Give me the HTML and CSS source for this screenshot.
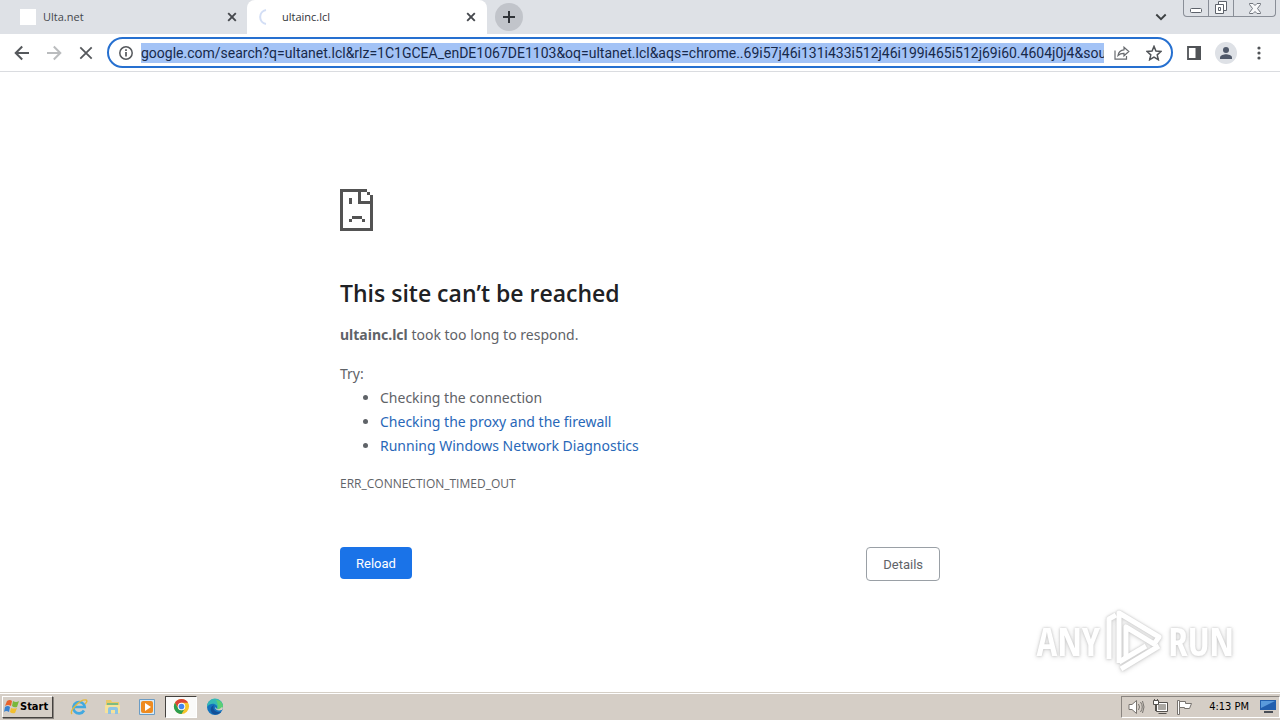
FILE: index.html
```html
<!DOCTYPE html>
<html lang="en">
<head>
<meta charset="utf-8">
<meta name="viewport" content="width=device-width, initial-scale=1">
<title>ultainc.lcl</title>
<link rel="stylesheet" href="styles.css">
</head>
<body>
<header class="tabstrip">
  <div class="tab">
    <span class="favicon"></span>
    <span class="tab-title">Ulta.net</span>
    <button class="icon-button tab-close" aria-label="Close Ulta.net"><svg width="10" height="10" viewBox="0 0 10 10"><path d="M1.2 1.2l7.6 7.6M8.8 1.2L1.2 8.8" stroke="#45484d" stroke-width="1.9"/></svg></button>
  </div>
  <div class="tab tab-active">
    <svg class="spinner" width="16" height="16" viewBox="0 0 16 16" fill="none"><path d="M9 1.1A7 7 0 0 0 9 14.9" stroke="#d3def5" stroke-width="2"/></svg>
    <span class="tab-title">ultainc.lcl</span>
    <button class="icon-button tab-close" aria-label="Close ultainc.lcl"><svg width="10" height="10" viewBox="0 0 10 10"><path d="M1.2 1.2l7.6 7.6M8.8 1.2L1.2 8.8" stroke="#45484d" stroke-width="1.9"/></svg></button>
  </div>
  <button class="icon-button new-tab" aria-label="New tab"><svg width="12" height="12" viewBox="0 0 12 12"><path d="M6 0v12M0 6h12" stroke="#303338" stroke-width="2"/></svg></button>
  <button class="icon-button tab-search" aria-label="Search tabs"><svg width="12" height="8" viewBox="0 0 12 8" fill="none"><path d="M1.3 1.5L6 6.2l4.700-4.700" stroke="#3c4043" stroke-width="1.9"/></svg></button>
  <div class="window-controls">
    <button class="icon-button win-button" aria-label="Minimize"><svg width="12" height="5" viewBox="0 0 12 5"><rect x=".5" y=".5" width="11" height="4" rx="1" fill="#fff" stroke="#5d626b"/></svg></button>
    <button class="icon-button win-button" aria-label="Restore"><svg width="14" height="14" viewBox="0 0 14 14" fill="#fff" stroke="#5d626b"><path d="M4.500.5h8v9h-8z"/><path d="M1.500 3.500h8v9h-8z"/><path d="M4.500 6.500h2v3h-2z"/></svg></button>
    <button class="icon-button win-button win-close" aria-label="Close window"><svg width="12" height="11" viewBox="0 0 12 11"><path d="M.5.500h3.500l2 2 2-2h3.500v1l-3 4 3 4v1H8l-2-2-2 2H.5v-1l3-4-3-4z" fill="#f7f8fa" stroke="#70757d"/></svg></button>
  </div>
</header>
<nav class="toolbar" aria-label="Browser toolbar">
  <button class="icon-button nav-button" aria-label="Back"><svg width="16" height="16" viewBox="0 0 16 16" fill="none"><path d="M15 8H2M8.200 1.500L1.700 8l6.500 6.500" stroke="#55585c" stroke-width="2"/></svg></button>
  <button class="icon-button nav-button" aria-label="Forward"><svg width="16" height="16" viewBox="0 0 16 16" fill="none"><path d="M1 8h13M7.800 1.500L14.300 8l-6.500 6.500" stroke="#babcbe" stroke-width="2"/></svg></button>
  <button class="icon-button nav-button" aria-label="Stop loading"><svg width="14" height="14" viewBox="0 0 14 14"><path d="M1.300 1.300l11.400 11.400M12.700 1.300L1.300 12.700" stroke="#55585c" stroke-width="1.800"/></svg></button>
  <div class="omnibox">
    <button class="icon-button" aria-label="View site information"><svg width="14" height="14" viewBox="0 0 14 14"><circle cx="7" cy="7" r="6.200" fill="none" stroke="#55585c" stroke-width="1.500"/><path d="M7 6v4.500M7 3.300v1.700" stroke="#55585c" stroke-width="1.700"/></svg></button>
    <input class="address" type="text" aria-label="Address" spellcheck="false" value="google.com/search?q=ultanet.lcl&amp;rlz=1C1GCEA_enDE1067DE1103&amp;oq=ultanet.lcl&amp;aqs=chrome..69i57j46i131i433i512j46i199i465i512j69i60.4604j0j4&amp;sour">
    <button class="icon-button share" aria-label="Share"><svg width="16" height="14" viewBox="0 0 16 14" fill="none" stroke="#686b6f" stroke-width="1.200"><path d="M1 4.500v8.700h11.500V10"/><path d="M4 9.500c.6-3.700 2.800-5.500 6-5.700V1.200l4.800 4.300L10 9.800V7.300C7.500 7.200 5.700 7.800 4 9.500z"/></svg></button>
    <button class="icon-button bookmark" aria-label="Bookmark this tab"><svg width="16" height="16" viewBox="0 0 14 14"><path d="M7 1.200l1.700 4.100 4.400.4-3.300 2.900 1 4.300L7 10.600l-3.800 2.300 1-4.300L.9 5.700l4.400-.4z" fill="none" stroke="#505357" stroke-width="1.300"/></svg></button>
  </div>
  <button class="icon-button side-panel" aria-label="Side panel"><svg width="14" height="14" viewBox="0 0 14 14"><path d="M1 1h12v12H1z" fill="#fff" stroke="#505357" stroke-width="1.800"/><path d="M8.500 0H14v14H8.500z" fill="#505357"/></svg></button>
  <button class="icon-button profile" aria-label="Profile"><svg width="22" height="22" viewBox="0 0 22 22"><circle cx="11" cy="11" r="11" fill="#dee1e6"/><circle cx="11" cy="8" r="3" fill="#50596a"/><path d="M5 17v-1.500c0-2.300 4-3.300 6-3.300s6 1 6 3.300V17z" fill="#50596a"/></svg></button>
  <button class="icon-button more" aria-label="Browser menu"><svg width="4" height="14" viewBox="0 0 4 14" fill="#505357"><circle cx="2" cy="2" r="1.600"/><circle cx="2" cy="7" r="1.600"/><circle cx="2" cy="12" r="1.600"/></svg></button>
</nav>
<main class="page">
  <div class="content">
    <svg class="sad-page" width="33" height="42" viewBox="0 0 33 42" fill="#535353" shape-rendering="crispEdges"><path d="M0 0h27v3H3v36h27V15H18V3h3v9h9V6h3v36H0z"/><path d="M27 3h3v3h-3zM9 9h3v6H9zM12 27h10v3H12zM9 30h3v3H9zM22 30h3v3h-3z"/></svg>
    <h1>This site can’t be reached</h1>
    <p><strong>ultainc.lcl</strong> took too long to respond.</p>
    <div class="suggestions">
      <p>Try:</p>
      <ul>
        <li>Checking the connection</li>
        <li><a href="#proxy">Checking the proxy and the firewall</a></li>
        <li><a href="#diagnostics">Running Windows Network Diagnostics</a></li>
      </ul>
    </div>
    <p class="error-code">ERR_CONNECTION_TIMED_OUT</p>
    <div class="actions">
      <button class="action reload">Reload</button>
      <button class="action details">Details</button>
    </div>
  </div>
  <div class="watermark" aria-label="ANY RUN">
    <span>ANY</span>
    <svg width="60" height="66" viewBox="0 0 60 66" fill="none" stroke="#fff" stroke-width="5" stroke-linejoin="round"><path d="M5 51V11l7-4"/><path d="M15 55V5l40 24-5 7-28-17v30"/><path d="M15 54l27-16M17 61l38-23"/></svg>
    <span>RUN</span>
  </div>
</main>
<footer class="taskbar">
  <button class="start"><svg width="16" height="16" viewBox="0 0 16 16"><path d="M3 2q3-2 5 0L7 7Q4 5 1 7z" fill="#e9632c"/><path d="M9 2q3 2 6 0l-2 6q-3 1-5-1z" fill="#79b83c"/><path d="M1 8q3-2 5 0l-1 5q-3-2-5 0z" fill="#3a82d0"/><path d="M7 9q3 1 6 0l-2 5q-3 1-5-1z" fill="#f2bf30"/></svg>Start</button>
  <button class="icon-button task" aria-label="Internet Explorer"><svg width="18" height="18" viewBox="0 0 18 18" fill="none"><path d="M14 12.500A5.700 5.700 0 1 1 14.700 9H4" stroke="#42a9e0" stroke-width="2.600"/><path d="M2 16C-1 13 10 1 16 2c2 1 0 3-1 4" stroke="#e5b93c" stroke-width="1.400"/></svg></button>
  <button class="icon-button task" aria-label="File Explorer"><svg width="18" height="18" viewBox="0 0 18 18"><path d="M2 2h5l1 2h7v11H2z" fill="#e9c968"/><path d="M3 5h11v3H3z" fill="#7dbb80"/><path d="M1 7h15v8H1z" fill="#f6e29a"/><path d="M4 16v-5q0-2 2-2h6q2 0 2 2v5h-3v-4H7v4z" fill="#8dc4e4"/></svg></button>
  <button class="icon-button task" aria-label="Media Player"><svg width="18" height="18" viewBox="0 0 18 18"><path d="M1.500 1.500h15v15h-15z" fill="#d8ebf8" stroke="#6b9cc4"/><path d="M3 5q0-2 2-2h8q2 0 2 2v8q0 2-2 2H5q-2 0-2-2z" fill="#ee8b20"/><path d="M7 5l6 4-6 4z" fill="#fff"/></svg></button>
  <button class="icon-button task task-active" aria-label="Google Chrome"><svg width="17" height="17" viewBox="0 0 18 18"><circle cx="9" cy="9" r="8" fill="#f6c42b"/><path d="M2.070 5A8 8 0 0 1 15.930 5H9a4 4 0 0 0-3.500 6z" fill="#dc4437"/><path d="M2.070 5A8 8 0 0 0 9 17l3.500-6a4 4 0 0 1-7 0z" fill="#2c9e50"/><circle cx="9" cy="9" r="4" fill="#fff"/><circle cx="9" cy="9" r="3" fill="#4285ee"/></svg></button>
  <button class="icon-button task" aria-label="Microsoft Edge"><svg width="18" height="18" viewBox="0 0 18 18"><circle cx="9" cy="9" r="8" fill="#1473bd"/><path d="M1 9a8 8 0 0 1 16-1c0 4-4 4-6 3 2-5-6-8-10-2z" fill="#35b9b5"/><path d="M10 2c5 0 7 4 7 6 0 4-4 4-6 3 2-3 0-7-1-9z" fill="#5bcf75"/><path d="M8 7c-2 4 1 8 7 7-2 3-9 4-10-1-1-3 1-5 3-6z" fill="#124f98"/><path d="M9 9c0 3 3 4 7 3l1-2-1-1q-3 3-5 2z" fill="#d6cfc6"/></svg></button>
  <div class="tray">
    <svg width="17" height="16" viewBox="0 0 17 16" fill="#fff" stroke="#77736e"><path d="M1 5.500h3L8.500 1.500v13L4 10.500H1z"/><path d="M10.500 5q2 3 0 6M12.500 3q3.500 5 0 10M14.500 2q3 6 0 12" fill="none"/></svg>
    <svg width="17" height="16" viewBox="0 0 17 16" stroke="#55524e"><path d="M4.500 3.500h11v9h-11z" fill="#fff"/><path d="M6.500 5.500h7v5h-7z" fill="#aaa7a2" stroke="#aaa7a2"/><path d="M6.500 14.500h8M1.500 1.500h5v4h-5zM2.500 0v2M5.500 0v2M3.500 6v6" fill="#fff"/></svg>
    <svg width="17" height="16" viewBox="0 0 17 16" stroke="#77736e"><path d="M1.500 1.500h2v14h-2z" fill="#fff"/><path d="M3.500 2.500h6v2h6l-2 5h-5v-1h-5z" fill="#fff"/></svg>
    <time>4:13 PM</time>
    <svg class="desktop" width="16" height="15" viewBox="0 0 16 15"><path d="M0 1h16v10H0z" fill="#225fae"/><path d="M1 2h14L1 9z" fill="#5a9adb"/><path d="M4 12h9v2H4z" fill="#484d55"/></svg>
  </div>
</footer>
</body>
</html>
```
FILE: styles.css
```css
* { box-sizing: border-box; }
body {
  display: flex;
  flex-direction: column;
  min-height: 100vh;
  margin: 0;
  background: #fff;
  color: #5f6368;
  font: 14px/24px "Noto Sans", sans-serif;
}
svg { display: block; flex: none; }
button { font: inherit; }
.icon-button {
  display: flex;
  flex: none;
  align-items: center;
  justify-content: center;
  padding: 0;
  border: 0;
  background: none;
}
.tabstrip {
  display: flex;
  align-items: center;
  height: 34px;
  background: #dee1e6;
  color: #303338;
  font-size: 11px;
  font-family: "Open Sans", sans-serif;
}
.tab {
  display: flex;
  align-items: center;
  flex: 0 1 240px;
  height: 34px;
  padding: 0 10px 0 12px;
}
.tab:first-child { flex-basis: 247px; padding: 0 9px 0 20px; }
.tab-active { border-radius: 8px 8px 0 0; background: #fff; }
.favicon { width: 16px; height: 16px; background: #fff; }
.spinner { margin-left: -2px; }
.tab-title { flex: 1; margin-left: 7px; }
.tab-active .tab-title { margin-left: 9px; }
.tab:first-child .tab-title { color: #44474c; }
.tab-close { width: 12px; height: 16px; }
.new-tab { width: 28px; height: 28px; margin-left: 8px; border-radius: 50%; background: #c1c4ca; }
.tab-search { width: 24px; height: 24px; margin-left: auto; }
.window-controls {
  display: flex;
  align-self: flex-start;
  height: 17px;
  margin: 0 4px 0 10px;
  border: 1px solid #898e97;
  border-top: 0;
  border-radius: 0 0 4px 4px;
}
.win-button { width: 25px; border-right: 1px solid #898e97; }
.win-button:first-child { padding-top: 4px; }
.win-close { width: 41px; border-right: 0; }
.toolbar {
  display: flex;
  align-items: center;
  height: 38px;
  padding: 0 9px 0 10px;
  border-bottom: 1px solid #dadce0;
}
.nav-button { width: 24px; height: 24px; margin-right: 8px; }
.omnibox {
  display: flex;
  flex: 1;
  align-items: center;
  min-width: 0;
  height: 31px;
  margin-left: 1px;
  padding: 0 9px 0 10px;
  border: 2px solid #2670d0;
  border-radius: 16px;
}
.address {
  flex: 1;
  min-width: 0;
  height: 20px;
  margin-left: 8px;
  padding: 0;
  border: 0;
  outline: 0;
  background: #a3c3f6;
  color: #17294a;
  font: 14px/20px Roboto, sans-serif;
}
.share { margin-left: 10px; }
.bookmark { margin-left: 16px; }
.side-panel { margin-left: 14px; }
.profile { margin-left: 14px; }
.more { width: 24px; margin-left: 10px; }
.page {
  position: relative;
  flex: 1;
  padding: 117px 24px 0;
}
.content { max-width: 600px; margin: 0 auto; }
h1 {
  margin: 48px 0 16px;
  color: #202124;
  font-family: "Open Sans", sans-serif;
  font-size: 23px;
  font-weight: 600;
  line-height: 28px;
}
p, ul { margin: 0; }
ul { padding-left: 40px; }
.suggestions { margin-top: 15px; }
a { color: #2867b8; text-decoration: none; }
.error-code { margin-top: 14px; font-family: "Open Sans", sans-serif; font-size: 12px; }
.actions {
  display: flex;
  align-items: flex-start;
  justify-content: space-between;
  margin-top: 51px;
}
.action {
  padding: 2px 16px 0;
  border: 0;
  border-radius: 4px;
  font: 13px/30px Roboto, sans-serif;
}
.reload { background: #1a73e8; color: #fff; }
.details { border: 1px solid #9aa0a6; background: #fff; color: #5f6368; }
.watermark {
  position: absolute;
  right: 46px;
  bottom: 18px;
  display: flex;
  align-items: center;
  gap: 4px;
  color: #fff;
  font: bold 39px/66px "Liberation Sans Narrow", "Open Sans Condensed", "Roboto Condensed", sans-serif;
  filter: drop-shadow(0 0 1px #c4c4c4) drop-shadow(0 1px 2px #ddd);
}
.taskbar {
  display: flex;
  align-items: center;
  height: 28px;
  padding-left: 2px;
  border-top: 1px solid #d5cfc6;
  background: #d5cec6;
  box-shadow: inset 0 1px #fff;
  color: #000;
  font: 11px/16px "DejaVu Sans Condensed", sans-serif;
}
.start {
  display: flex;
  align-items: center;
  height: 22px;
  margin-right: 10px;
  padding: 0 4px 0 1px;
  border: 1px solid;
  border-color: #fff #45423f #45423f #fff;
  background: #d5cec6;
  box-shadow: 1px 1px #8a8580;
  font-weight: bold;
}
.task { width: 32px; height: 22px; margin-right: 2px; }
.task-active {
  border: 1px solid;
  border-color: #45423f #fff #fff #45423f;
  background: #fafaf9;
}
.tray {
  display: flex;
  align-items: center;
  height: 22px;
  margin-left: auto;
  padding: 0 3px 0 6px;
  gap: 7px;
  border: 1px solid;
  border-color: #8a8580 #fff #fff #8a8580;
}
.tray time { margin-left: 9px; }
.desktop { margin-left: 4px; }
```
